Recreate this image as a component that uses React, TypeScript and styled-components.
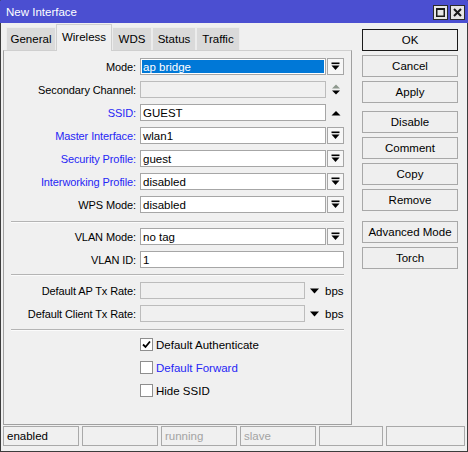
import React from "react";
import styled, { createGlobalStyle } from "styled-components";

const GlobalStyle = createGlobalStyle`
  * { box-sizing: border-box; }
  html, body {
    margin: 0;
    padding: 0;
    background: #f0f0f0;
  }
  body {
    font-family: "Liberation Sans", Arial, sans-serif;
    font-size: 11px;
    color: #000;
  }
`;

const Window = styled.div`
  width: 468px;
  height: 452px;
  display: flex;
  flex-direction: column;
  background: #f0f0f0;
  border: 1px solid #3c3c3c;
  border-top-color: #4b4fd1;
`;

const TitleBar = styled.div`
  height: 22px;
  flex: none;
  display: flex;
  align-items: center;
  justify-content: space-between;
  padding: 0 3px 0 6px;
  margin: 0 -1px;
  background: #4b4fd1;
  color: #fff;
  font-size: 11.5px;
`;

const TitleButtons = styled.div`
  display: flex;
  gap: 2px;
`;

const TitleButton = styled.div`
  width: 15px;
  height: 15px;
  display: flex;
  align-items: center;
  justify-content: center;
  background: #e6e6e6;
  border: 1px solid #2b2b2b;
`;

const Body = styled.div`
  flex: 1;
  display: flex;
  padding: 0 8px 0 2px;
  min-height: 0;
`;

const LeftColumn = styled.div`
  width: 349px;
  display: flex;
  flex-direction: column;
`;

const TabRow = styled.div`
  height: 27px;
  display: flex;
  align-items: flex-end;
  padding-left: 3px;
`;

const Tab = styled.div<{ $active?: boolean; $width: number }>`
  width: ${({ $width }) => `${$width}px`};
  height: ${({ $active }) => ($active ? "27px" : "23px")};
  display: flex;
  align-items: center;
  justify-content: center;
  padding-bottom: ${({ $active }) => ($active ? "2px" : "0")};
  margin-bottom: ${({ $active }) => ($active ? "-1px" : "0")};
  background: ${({ $active }) => ($active ? "#f0f0f0" : "#dadada")};
  border: 1px solid ${({ $active }) => ($active ? "#cfcfcf" : "#ececec")};
  border-bottom: none;
  position: relative;
  z-index: ${({ $active }) => ($active ? 1 : 0)};
  font-size: 11.5px;
`;

const Panel = styled.div`
  flex: 1;
  border: 1px solid #a0a0a0;
  border-top-color: #cfcfcf;
  padding: 7px 7px 0 0;
`;

const Section = styled.div`
  display: flex;
  flex-direction: column;
  gap: 6px;
`;

const Separator = styled.div<{ $top: number; $bottom: number }>`
  height: 2px;
  margin: ${({ $top, $bottom }) => `${$top}px 0 ${$bottom}px 7px`};
  border-top: 1px solid #b4b4b4;
  border-bottom: 1px solid #fbfbfb;
`;

const Row = styled.div`
  height: 17px;
  display: flex;
  align-items: center;
`;

const Label = styled.div<{ $link?: boolean }>`
  width: 132px;
  margin-right: 4px;
  text-align: right;
  white-space: nowrap;
  letter-spacing: -0.1px;
  color: ${({ $link }) => ($link ? "#2626f5" : "#000")};
`;

const Field = styled.div<{ $width?: number; $disabled?: boolean; $selected?: boolean }>`
  height: 17px;
  ${({ $width }) => ($width ? `width: ${$width}px;` : "flex: 1;")}
  display: flex;
  align-items: center;
  padding: 0 2px;
  border: 1px solid ${({ $disabled }) => ($disabled ? "#bcbcbc" : "#a6a6a6")};
  background: ${({ $disabled, $selected }) =>
    $selected ? "#0078d7" : $disabled ? "#f0f0f0" : "#fff"};
  box-shadow: ${({ $selected }) => ($selected ? "inset 0 0 0 1px #fff" : "none")};
  color: ${({ $selected }) => ($selected ? "#fff" : "#000")};
  white-space: nowrap;
  font-size: 11.5px;
`;

const Control = styled.div<{ $boxed?: boolean }>`
  width: 17px;
  height: 17px;
  margin-left: 1px;
  display: flex;
  align-items: center;
  justify-content: center;
  border: 1px solid ${({ $boxed }) => ($boxed ? "#a6a6a6" : "transparent")};
  background: ${({ $boxed }) => ($boxed ? "#f7f7f7" : "transparent")};
`;

const RateArrow = styled.div`
  width: 9px;
  margin-left: 5px;
  display: flex;
  align-items: center;
`;

const Unit = styled.span`
  margin-left: 6px;
  font-size: 11.5px;
`;

const CheckList = styled.div`
  display: flex;
  flex-direction: column;
  gap: 10px;
  padding-left: 136px;
`;

const CheckRow = styled.div`
  height: 13px;
  display: flex;
  align-items: center;
`;

const Box = styled.div`
  width: 13px;
  height: 13px;
  flex: none;
  display: flex;
  align-items: center;
  justify-content: center;
  border: 1px solid #8e8e8e;
  background: #fff;
`;

const CheckText = styled.span<{ $link?: boolean }>`
  margin-left: 3px;
  color: ${({ $link }) => ($link ? "#2626f5" : "#000")};
  font-size: 11.5px;
`;

const ButtonColumn = styled.div`
  width: 96px;
  margin-left: 10px;
  padding-top: 6px;
  display: flex;
  flex-direction: column;
`;

const Button = styled.div<{ $default?: boolean; $gapTop?: number }>`
  height: 22px;
  margin-top: ${({ $gapTop }) => `${$gapTop ?? 4}px`};
  display: flex;
  align-items: center;
  justify-content: center;
  border: 1px solid ${({ $default }) => ($default ? "#1a1a1a" : "#a8a8a8")};
  background: #efefef;
  font-size: 11.5px;
`;

const StatusBar = styled.div`
  flex: none;
  display: flex;
  gap: 3px;
  margin-top: 1px;
  padding: 0 2px 5px 2px;
`;

const StatusCell = styled.div<{ $width?: number; $muted?: boolean }>`
  height: 20px;
  ${({ $width }) => ($width ? `width: ${$width}px;` : "flex: 1;")}
  display: flex;
  align-items: center;
  padding-left: 3px;
  border: 1px solid #a9a9a9;
  color: ${({ $muted }) => ($muted ? "#a3a3a3" : "#000")};
  font-size: 11.5px;
`;

const DropIcon = () => (
  <svg width="9" height="9" viewBox="0 0 9 9">
    <rect x="0.5" y="0.5" width="8" height="1.6" fill="#000" />
    <polygon points="0.5,3.5 8.5,3.5 4.5,8" fill="#000" />
  </svg>
);

const SpinIcon = () => (
  <svg width="10" height="13" viewBox="0 0 10 13">
    <polygon points="1,5.5 9,5.5 5,1.5" fill="#8d988d" />
    <polygon points="1,7.5 9,7.5 5,11.5" fill="#000" />
  </svg>
);

const UpIcon = () => (
  <svg width="10" height="6" viewBox="0 0 10 6">
    <polygon points="0.5,5.5 9.5,5.5 5,1" fill="#000" />
  </svg>
);

const DownIcon = () => (
  <svg width="9" height="6" viewBox="0 0 9 6">
    <polygon points="0,0.5 9,0.5 4.5,5.5" fill="#000" />
  </svg>
);

const CheckMark = () => (
  <svg width="9" height="9" viewBox="0 0 9 9">
    <path d="M1 4.5 L3.5 7 L8 1.5" stroke="#000" strokeWidth="1.8" fill="none" />
  </svg>
);

const MaxIcon = () => (
  <svg width="9" height="9" viewBox="0 0 9 9">
    <rect x="0.75" y="1" width="7.5" height="7.25" fill="none" stroke="#1a1a1a" strokeWidth="1.5" />
    <rect x="0" y="0" width="9" height="2" fill="#1a1a1a" />
  </svg>
);

const CloseIcon = () => (
  <svg width="9" height="9" viewBox="0 0 9 9">
    <path d="M1 1 L8 8 M8 1 L1 8" stroke="#1a1a1a" strokeWidth="2" />
  </svg>
);

type Select = { label: string; value: string; link?: boolean };

const topRows: Select[] = [
  { label: "Master Interface:", value: "wlan1", link: true },
  { label: "Security Profile:", value: "guest", link: true },
  { label: "Interworking Profile:", value: "disabled", link: true },
  { label: "WPS Mode:", value: "disabled" },
];

const tabs = [
  { name: "General", width: 50 },
  { name: "Wireless", width: 56 },
  { name: "WDS", width: 40 },
  { name: "Status", width: 44 },
  { name: "Traffic", width: 44 },
];

const App: React.FC = () => {
  return (
    <>
      <GlobalStyle />
      <Window>
        <TitleBar>
          <span>New Interface</span>
          <TitleButtons>
            <TitleButton>
              <MaxIcon />
            </TitleButton>
            <TitleButton>
              <CloseIcon />
            </TitleButton>
          </TitleButtons>
        </TitleBar>

        <Body>
          <LeftColumn>
            <TabRow>
              {tabs.map((t) => (
                <Tab key={t.name} $width={t.width} $active={t.name === "Wireless"}>
                  {t.name}
                </Tab>
              ))}
            </TabRow>

            <Panel>
              <Section>
                <Row>
                  <Label>Mode:</Label>
                  <Field $width={186} $selected>
                    ap bridge
                  </Field>
                  <Control $boxed>
                    <DropIcon />
                  </Control>
                </Row>
                <Row>
                  <Label>Secondary Channel:</Label>
                  <Field $width={186} $disabled />
                  <Control>
                    <SpinIcon />
                  </Control>
                </Row>
                <Row>
                  <Label $link>SSID:</Label>
                  <Field $width={186}>GUEST</Field>
                  <Control>
                    <UpIcon />
                  </Control>
                </Row>
                {topRows.map((r) => (
                  <Row key={r.label}>
                    <Label $link={r.link}>{r.label}</Label>
                    <Field $width={186}>{r.value}</Field>
                    <Control $boxed>
                      <DropIcon />
                    </Control>
                  </Row>
                ))}
              </Section>

              <Separator $top={8} $bottom={5} />

              <Section>
                <Row>
                  <Label>VLAN Mode:</Label>
                  <Field $width={186}>no tag</Field>
                  <Control $boxed>
                    <DropIcon />
                  </Control>
                </Row>
                <Row>
                  <Label>VLAN ID:</Label>
                  <Field>1</Field>
                </Row>
              </Section>

              <Separator $top={6} $bottom={6} />

              <Section>
                <Row>
                  <Label>Default AP Tx Rate:</Label>
                  <Field $width={165} $disabled />
                  <RateArrow>
                    <DownIcon />
                  </RateArrow>
                  <Unit>bps</Unit>
                </Row>
                <Row>
                  <Label>Default Client Tx Rate:</Label>
                  <Field $width={165} $disabled />
                  <RateArrow>
                    <DownIcon />
                  </RateArrow>
                  <Unit>bps</Unit>
                </Row>
              </Section>

              <Separator $top={7} $bottom={7} />

              <CheckList>
                <CheckRow>
                  <Box>
                    <CheckMark />
                  </Box>
                  <CheckText>Default Authenticate</CheckText>
                </CheckRow>
                <CheckRow>
                  <Box />
                  <CheckText $link>Default Forward</CheckText>
                </CheckRow>
                <CheckRow>
                  <Box />
                  <CheckText>Hide SSID</CheckText>
                </CheckRow>
              </CheckList>
            </Panel>
          </LeftColumn>

          <ButtonColumn>
            <Button $default $gapTop={0}>
              OK
            </Button>
            <Button>Cancel</Button>
            <Button>Apply</Button>
            <Button $gapTop={8}>Disable</Button>
            <Button>Comment</Button>
            <Button>Copy</Button>
            <Button>Remove</Button>
            <Button $gapTop={10}>Advanced Mode</Button>
            <Button>Torch</Button>
          </ButtonColumn>
        </Body>

        <StatusBar>
          <StatusCell $width={76}>enabled</StatusCell>
          <StatusCell $width={76} />
          <StatusCell $width={76} $muted>
            running
          </StatusCell>
          <StatusCell $width={76} $muted>
            slave
          </StatusCell>
          <StatusCell $width={64} />
          <StatusCell />
        </StatusBar>
      </Window>
    </>
  );
};

export default App;
